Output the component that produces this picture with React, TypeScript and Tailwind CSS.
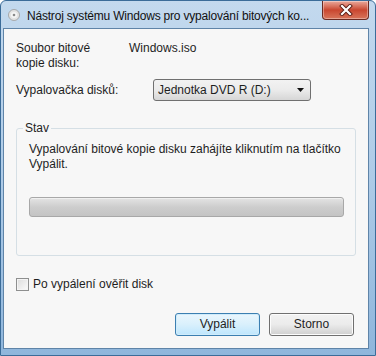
import React from 'react';

const font = { fontFamily: '"Liberation Sans", Arial, sans-serif' };

function DiscIcon() {
  return (
    <svg width="12" height="12" viewBox="0 0 12 12" className="mt-[8px] ml-[7px] shrink-0">
      <circle cx="6" cy="6" r="5.5" fill="#e4e4e4" stroke="#9a9a9a" strokeWidth="0.8" />
      <circle cx="6" cy="6" r="3" fill="#f6f6f6" />
      <circle cx="6" cy="6" r="1.3" fill="#8a8a8a" />
    </svg>
  );
}

function CloseButton() {
  return (
    <div className="w-[47px] h-[19px] shrink-0 ml-auto mr-[6px] rounded-b-[4px] border border-t-0 border-[#6b2a22] bg-gradient-to-b from-[#e9a99c] via-[#c9462f] to-[#d8745a] flex items-center justify-center shadow-[inset_0_0_0_1px_rgba(255,255,255,0.35)]">
      <svg width="14" height="12" viewBox="0 0 14 12">
        <path d="M3 2 L11 10 M11 2 L3 10" stroke="#5a1c14" strokeWidth="4" strokeLinecap="square" />
        <path d="M3 2 L11 10 M11 2 L3 10" stroke="#ffffff" strokeWidth="2.2" strokeLinecap="square" />
      </svg>
    </div>
  );
}

export default function App() {
  return (
    <div
      className="w-[376px] h-[356px] flex flex-col rounded-t-[6px] border border-[#3b6c99] bg-gradient-to-b from-[#c3d9ee] via-[#aecbe7] to-[#8fb6dc] text-[12px] text-[#1e1e1e]"
      style={font}
    >
      <div className="h-[27px] flex items-start shrink-0">
        <DiscIcon />
        <span className="whitespace-nowrap ml-[7px] mt-[6px] text-[12px] tracking-[-0.2px] text-[#111]">
          Nástroj systému Windows pro vypalování bitových ko...
        </span>
        <CloseButton />
      </div>
      <div className="flex-1 ml-[2px] mr-[6px] mb-[6px] border border-[#5f84a8] bg-[#f7f7f7] flex flex-col px-[12px] pt-[12px] leading-[15px]">
        <div className="flex">
          <div className="w-[113px]">
            Soubor bitové
            <br />
            kopie disku:
          </div>
          <div>Windows.iso</div>
        </div>
        <div className="flex items-center mt-[8px]">
          <div className="w-[137px]">Vypalovačka disků:</div>
          <div className="w-[158px] h-[22px] rounded-[3px] border border-[#707070] bg-gradient-to-b from-[#f2f2f2] via-[#ebebeb] to-[#d6d6d6] flex items-center pl-[4px] pr-[6px]">
            <span className="flex-1">Jednotka DVD R (D:)</span>
            <svg width="7" height="4" viewBox="0 0 7 4">
              <path d="M0 0 H7 L3.5 4 Z" fill="#111" />
            </svg>
          </div>
        </div>
        <div className="mt-[27px] h-[128px] w-[340px] rounded-[3px] border border-[#d5dfe5] flex flex-col">
          <span className="-mt-[8px] ml-[6px] px-[2px] self-start bg-[#f7f7f7]">Stav</span>
          <p className="mt-[6px] pl-[12px] pr-[8px]">
            Vypalování bitové kopie disku zahájíte kliknutím na tlačítko Vypálit.
          </p>
          <div className="mt-[25px] ml-[12px] w-[315px] h-[20px] rounded-[3px] border border-[#a8a8a8] bg-gradient-to-b from-[#e4e4e4] via-[#cdcdcd] to-[#c4c4c4] shadow-[inset_0_1px_0_#f0f0f0]" />
        </div>
        <label className="flex items-center mt-[21px]">
          <span className="w-[13px] h-[13px] border border-[#8e8f8f] bg-gradient-to-br from-[#dcdcdc] to-[#fbfbfb] shadow-[inset_0_0_0_1px_#f4f4f4]" />
          <span className="ml-[4px]">Po vypálení ověřit disk</span>
        </label>
        <div className="flex justify-end gap-[9px] mt-[21px] pr-[2px]">
          <button className="w-[85px] h-[23px] rounded-[3px] border border-[#3c7fb1] bg-gradient-to-b from-[#eaf6fd] via-[#d9f0fc] to-[#bee6fd] shadow-[inset_0_0_0_1px_#d0ecfb] text-[12px]">
            Vypálit
          </button>
          <button className="w-[85px] h-[23px] rounded-[3px] border border-[#707070] bg-gradient-to-b from-[#f2f2f2] via-[#ebebeb] to-[#cfcfcf] shadow-[inset_0_0_0_1px_#fcfcfc] text-[12px]">
            Storno
          </button>
        </div>
      </div>
    </div>
  );
}
